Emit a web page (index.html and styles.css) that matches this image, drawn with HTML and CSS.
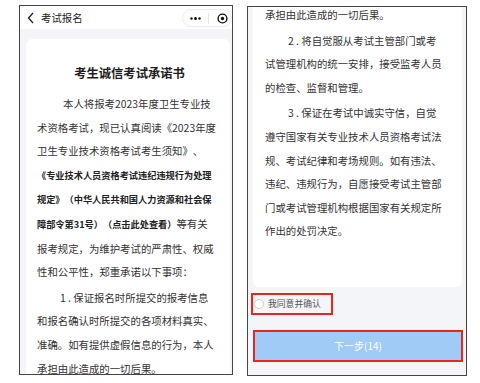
FILE: index.html
```html
<!DOCTYPE html>
<html lang="zh-CN">
<head>
    <meta charset="UTF-8">
    <meta name="viewport" content="width=device-width, initial-scale=1.0">
    <title>考试报名</title>
    <link rel="stylesheet" href="styles.css">
</head>
<body>
    <div class="shots">
        <!-- first screen: top of the pledge -->
        <div class="phone">
            <div class="navbar">
                <svg class="back" width="8" height="12" viewBox="0 0 8 12">
                    <polyline points="6,1 1.5,6 6,11" fill="none" stroke="#222" stroke-width="1.3"/>
                </svg>
                <span class="nav-title">考试报名</span>
                <div class="capsule">
                    <svg class="more" width="11" height="3" viewBox="0 0 11 3">
                        <circle cx="1.5" cy="1.5" r="1.2" fill="#111"/>
                        <circle cx="5.5" cy="1.5" r="1.5" fill="#111"/>
                        <circle cx="9.5" cy="1.5" r="1.2" fill="#111"/>
                    </svg>
                    <span class="divider"></span>
                    <svg class="target" width="11" height="11" viewBox="0 0 11 11">
                        <circle cx="5.5" cy="5.5" r="4.4" fill="none" stroke="#111" stroke-width="1.4"/>
                        <circle cx="5.5" cy="5.5" r="1.7" fill="#111"/>
                    </svg>
                </div>
            </div>
            <div class="page">
                <div class="card">
                    <h1 class="doc-title">考生诚信考试承诺书</h1>
                    <p class="lead">本人将报考2023年度卫生专业技<br>术资格考试，现已认真阅读《2023年度<br>卫生专业技术资格考试考生须知》、<br><b>《专业技术人员资格考试违纪违规行为处理<br>规定》（中华人民共和国人力资源和社会保<br>障部令第31号）（点击此处查看）</b>等有关<br>报考规定，为维护考试的严肃性、权威<br>性和公平性，郑重承诺以下事项：</p>
                    <p class="item">1 . 保证报名时所提交的报考信息<br>和报名确认时所提交的各项材料真实、<br>准确。如有提供虚假信息的行为，本人<br>承担由此造成的一切后果。</p>
                </div>
            </div>
        </div>

        <!-- second screen: scrolled to the bottom -->
        <div class="phone second">
            <div class="page">
                <div class="card scrolled">
                    <p>承担由此造成的一切后果。</p>
                    <p class="item">2 . 将自觉服从考试主管部门或考<br>试管理机构的统一安排，接受监考人员<br>的检查、监督和管理。</p>
                    <p class="item">3 . 保证在考试中诚实守信，自觉<br>遵守国家有关专业技术人员资格考试法<br>规、考试纪律和考场规则。如有违法、<br>违纪、违规行为，自愿接受考试主管部<br>门或考试管理机构根据国家有关规定所<br>作出的处罚决定。</p>
                </div>
                <label class="agree">
                    <span class="radio"></span>
                    <span>我同意并确认</span>
                </label>
                <button class="next" disabled>下一步(14)</button>
            </div>
        </div>
    </div>
</body>
</html>
```

FILE: styles.css
```css
* {
    margin: 0;
    padding: 0;
    box-sizing: border-box;
    font-family: 'Noto Sans CJK SC', 'Noto Sans', sans-serif;
}

body {
    background-color: #fff;
    width: 480px;
    height: 383px;
    overflow: hidden;
    text-spacing-trim: space-all;
}

.shots {
    display: flex;
    align-items: flex-start;
    padding: 5px 0 0 19px;
}

.phone {
    width: 214px;
    height: 370px;
    border: 1px solid #444;
    background-color: #f4f5f9;
    overflow: hidden;
    display: flex;
    flex-direction: column;
}

.phone.second {
    width: 220px;
    margin-left: 14px;
    margin-top: 1px;
}

/* mini program title bar */
.navbar {
    height: 23px;
    flex-shrink: 0;
    background-color: #fff;
    display: flex;
    align-items: center;
    padding-left: 7px;
}

.back {
    display: block;
}

.nav-title {
    margin-left: 6px;
    font-size: 10.4px;
    color: #222;
}

.capsule {
    margin-left: auto;
    width: 50px;
    height: 18px;
    margin-top: 1px;
    border: 1px solid #ececec;
    border-radius: 9px;
    background-color: #fff;
    display: flex;
    align-items: center;
    padding-left: 7px;
    flex-shrink: 0;
}

.more,
.target {
    display: block;
    flex-shrink: 0;
}

.divider {
    width: 1px;
    height: 11px;
    background-color: #e6e6e6;
    margin: 0 8px 0 7px;
    flex-shrink: 0;
}

.page {
    flex: 1;
    padding: 10px 2px 0 6px;
}

.second .page {
    padding: 0 4px 0 5px;
}

.card {
    background-color: #fff;
    border-radius: 6px;
    padding: 26px 8px 0 11px;
    min-height: 400px;
}

.card.scrolled {
    min-height: 0;
    margin-top: -4px;
    border-radius: 0 0 6px 6px;
    padding: 0 8px 44px 12px;
}

.doc-title {
    font-size: 12.3px;
    line-height: 16px;
    font-weight: 700;
    color: #1e1e1e;
    text-align: center;
    margin-bottom: 11px;
}

.card p {
    font-size: 10.4px;
    line-height: 23.6px;
    color: #333;
    white-space: nowrap;
}

.card p + p {
    margin-top: 2px;
}

.lead {
    text-indent: 26px;
}

.item {
    text-indent: 23px;
}

.card b {
    font-size: 9.2px;
    font-weight: 700;
    color: #222;
}

/* agreement + next button */
.agree {
    display: flex;
    align-items: center;
    gap: 4px;
    width: 82px;
    height: 22px;
    margin: 6px 0 0 -2px;
    padding-left: 1px;
    border: 2px solid #e8261c;
    font-size: 8.8px;
    color: #555;
}

.radio {
    width: 10px;
    height: 10px;
    border: 1px solid #cfcfcf;
    border-radius: 50%;
    background-color: #fff;
    flex-shrink: 0;
}

.next {
    display: block;
    width: 206px;
    height: 28px;
    margin: 17px 0 0 2px;
    border: none;
    outline: 2px solid #e8261c;
    background-color: #9fcbf6;
    color: #fff;
    font-size: 10px;
}
```
